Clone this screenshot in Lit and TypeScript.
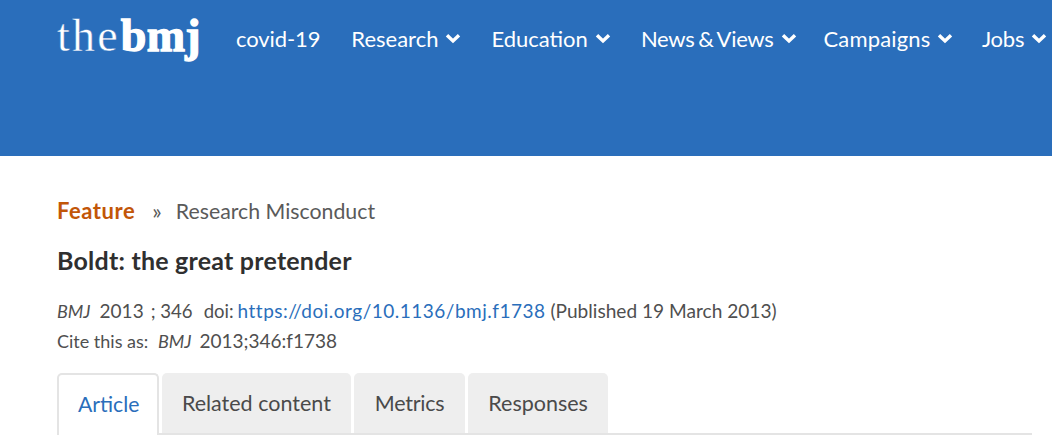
import { LitElement, html, css } from "lit";
import { customElement } from "lit/decorators.js";

const chevron = html`<svg class="chev" viewBox="0 0 16 11" width="16" height="11" aria-hidden="true"><path d="M2 2.2 8 8l6-5.8" fill="none" stroke="#fff" stroke-width="3.4"/></svg>`;

@customElement("app-root")
export class AppRoot extends LitElement {
  static styles = css`
    :host { display: block; width: 1052px; height: 444px; overflow: hidden; background: #fff; font-family: Lato, sans-serif; color: #4a4a4a; }
    header { height: 156px; background: #2a6ebb; box-sizing: border-box; padding: 11px 0 0 57px; display: flex; align-items: flex-start; white-space: nowrap; overflow: hidden; }
    .logo { display: flex; align-items: baseline; width: 179px; flex: none; color: #fff; line-height: 50px; height: 50px; }
    .the { font-family: "Liberation Serif", serif; font-size: 46px; letter-spacing: 2.2px; -webkit-text-stroke: 0.4px #2a6ebb; }
    .bmj { font-family: "Liberation Serif", serif; font-weight: 700; font-size: 46px; letter-spacing: 0.3px; margin-left: 1px; -webkit-text-stroke: 1.3px #fff; }
    nav { display: flex; padding-top: 14px; color: #fff; font-size: 22px; line-height: 28px; flex: none; }
    nav span { display: inline-flex; align-items: center; gap: 7px; margin-right: 30px; }
    nav .covid { margin-right: 31px; letter-spacing: -0.1px; }
    nav .news { word-spacing: -1.5px; letter-spacing: -0.3px; margin-right: 27px; }
    nav .camp { margin-right: 28.5px; letter-spacing: 0.15px; }
    nav .jobs { letter-spacing: -0.2px; }
    .chev { flex: none; margin-top: -1px; }
    main { padding: 42px 0 0 57px; }
    .crumb { font-size: 21.3px; line-height: 26px; display: flex; color: #5a5a5a; }
    .crumb b { color: #c25608; font-weight: 700; font-size: 22px; letter-spacing: 0.55px; }
    .crumb i { font-style: normal; margin: 0 14px 0 17px; font-size: 22px; }
    h1 { font-size: 25px; line-height: 30px; margin: 21px 0 0; font-weight: 700; color: #2f2f2f; letter-spacing: 0.22px; }
    .meta { font-size: 18px; line-height: 30px; margin-top: 21px; color: #4f4f4f; white-space: nowrap; }
    .meta p { margin: 0; display: flex; white-space: pre; }
    .meta em { margin-right: 9px; }
    .meta .num { font-size: 19px; }
    .meta .vol { margin: 0 11px 0 7px; font-size: 18.6px; }
    .meta .doi { font-size: 18.5px; }
    .meta a { color: #2a6ebb; text-decoration: none; font-size: 19px; letter-spacing: 0.5px; margin: 0 5px 0 4px; }
    .meta .pub { font-size: 19.1px; }
    .meta .cite { margin-right: 5px; }
    .meta .cite + em { margin-right: 8px; }
    .tabs { display: flex; gap: 3px; margin-top: 17px; width: 975px; height: 62px; border-bottom: 2px solid #e4e4e4; box-sizing: border-box; }
    .tab { font-size: 21.5px; line-height: 60px; padding: 0 20px; background: #eee; border-radius: 5px 5px 0 0; color: #4a4a4a; }
    .tab.metrics { letter-spacing: -0.25px; padding: 0 20.5px 0 21px; }
    .tab.resp { padding: 0 20.5px; }
    .tab.on { background: #fff; color: #2a6ebb; border: 2px solid #e4e4e4; border-bottom: 0; margin-bottom: -2px; padding: 0 17.5px 0 19px; line-height: 58px; font-size: 21.2px; }
  `;
  render() {
    return html`
      <header>
        <div class="logo"><span class="the">the</span><span class="bmj">bmj</span></div>
        <nav>
          <span class="covid">covid-19</span>
          <span>Research ${chevron}</span>
          <span>Education ${chevron}</span>
          <span class="news">News &amp; Views ${chevron}</span>
          <span class="camp">Campaigns ${chevron}</span>
          <span class="jobs">Jobs ${chevron}</span>
        </nav>
      </header>
      <main>
        <div class="crumb"><b>Feature</b><i>»</i><span>Research Misconduct</span></div>
        <h1>Boldt: the great pretender</h1>
        <div class="meta">
          <p><em>BMJ</em><span class="num">2013</span><span class="vol">; 346</span><span class="doi">doi:</span><a>https://doi.org/10.1136/bmj.f1738</a><span class="pub">(Published 19 March 2013)</span></p>
          <p><span class="cite">Cite this as: </span><em>BMJ</em><span class="num">2013;346:f1738</span></p>
        </div>
        <div class="tabs">
          <div class="tab on">Article</div>
          <div class="tab">Related content</div>
          <div class="tab metrics">Metrics</div>
          <div class="tab resp">Responses</div>
        </div>
      </main>
    `;
  }
}
